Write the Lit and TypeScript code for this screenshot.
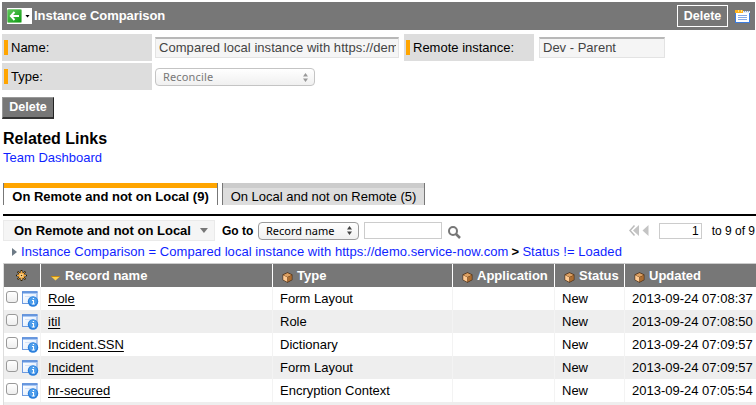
import { LitElement, html, css, svg } from "lit";
import { customElement } from "lit/decorators.js";

interface RecordRow {
  name: string;
  type: string;
  application: string;
  status: string;
  updated: string;
}

const rows: RecordRow[] = [
  { name: "Role", type: "Form Layout", application: "", status: "New", updated: "2013-09-24 07:08:37" },
  { name: "itil", type: "Role", application: "", status: "New", updated: "2013-09-24 07:08:50" },
  { name: "Incident.SSN", type: "Dictionary", application: "", status: "New", updated: "2013-09-24 07:09:57" },
  { name: "Incident", type: "Form Layout", application: "", status: "New", updated: "2013-09-24 07:09:57" },
  { name: "hr-secured", type: "Encryption Context", application: "", status: "New", updated: "2013-09-24 07:05:54" },
];

const backIcon = html`<svg width="15" height="14" viewBox="0 0 15 14">
  <defs><linearGradient id="g" x1="0" y1="0" x2="1" y2="1"><stop offset="0" stop-color="#62c95c" /><stop offset="1" stop-color="#0c9a12" /></linearGradient></defs>
  <rect x=".5" y=".5" width="14" height="13" rx="1" fill="url(#g)" stroke="#7fca7c" />
  <path d="M7.500 3 3.800 7l3.700 4M4 7H12" fill="none" stroke="#fff" stroke-width="1.900" />
</svg>`;

const formIcon = html`<svg width="15" height="13" viewBox="0 0 15 13">
  <rect x=".5" y="1.500" width="14" height="11" fill="#fff" stroke="#3b7de0" />
  <path d="M0 0h8v3H0z" fill="#ffb21c" /><path d="M3 0h1v2H3zM6 0h1v2H6z" fill="#ffe08a" />
  <path d="M8 1h7v2H8z" fill="#e9eef8" /><path d="M9 1h1v1H9zM11 1h1v1h-1zM13 1h1v1h-1z" fill="#8aa4cc" />
  <path d="M3 5.500h9M3 7.500h9M3 9.500h9" stroke="#86a8e6" />
</svg>`;

const cubeIcon = html`<svg class="cube" width="11" height="11" viewBox="0 0 11 11">
  <path d="M5.500 .3 10.400 2.500v5.600L5.500 10.700.6 8.100V2.500z" fill="#4a2a10" />
  <path d="M5.500 1 9.800 2.900 5.500 5 1.200 2.900z" fill="#dda163" />
  <path d="M1.200 3.200 5.400 5.200v4.700L1.200 7.700z" fill="#ffca92" />
  <path d="M9.800 3.200 5.600 5.200v4.700l4.200-2.200z" fill="#ac6d31" />
</svg>`;

const gearIcon = html`<svg width="11" height="11" viewBox="0 0 11 11">
  <path d="M5.500 0v11M0 5.500h11M1.600 1.600l7.800 7.800M9.400 1.600 1.600 9.400" stroke="#2b1d00" stroke-width="1.700" />
  <path d="M5.500 1v9M1 5.500h9M2.300 2.300l6.400 6.400M8.700 2.300 2.300 8.700" stroke="#f0a63c" stroke-width="1" />
  <circle cx="5.500" cy="5.500" r="3" fill="#f3ab45" />
  <circle cx="5.500" cy="5.500" r="1.700" fill="#ffe0a0" />
  <circle cx="5.500" cy="5.500" r=".8" fill="#4a2d00" />
</svg>`;

const infoIcon = html`<svg class="info" width="17" height="16" viewBox="0 0 17 16">
  <defs><linearGradient id="w" x1="0" y1="0" x2="1" y2="1"><stop offset="0" stop-color="#fff" /><stop offset="1" stop-color="#dce9fb" /></linearGradient></defs>
  <rect x=".5" y="1" width="14.500" height="11.500" fill="url(#w)" stroke="#6e9be0" />
  <path d="M0 1h15.500" stroke="#4f86d8" stroke-width="1.500" /><path d="M1 2.500h14" stroke="#a9c8f4" />
  <path d="M3 5.500h9" stroke="#d5e3f8" />
  <circle cx="11" cy="10.500" r="5.200" fill="#2a7fdc" />
  <circle cx="11" cy="9.800" r="3.900" fill="#4d9deb" />
  <path d="M10 9.500h1.500v3.500M9.800 13h3M10.800 7.500h1.300" fill="none" stroke="#fff" stroke-width="1.100" />
</svg>`;

const updown = (color: string) => svg`<svg width="5" height="9" viewBox="0 0 5 9"><path d="M0 3.500h5L2.500 0zM0 5.500h5L2.500 9z" fill=${color} /></svg>`;

@customElement("app-root")
export class AppRoot extends LitElement {
  static styles = css`
    :host { display: block; width: 756px; height: 405px; overflow: hidden; background: #fff; color: #000; font: 13px/16px "Liberation Sans", Arial, sans-serif; box-sizing: border-box; padding: 2px 0 0 2px; }
    * { box-sizing: border-box; }
    svg { display: block; flex: none; }
    div, span, a { white-space: nowrap; }
    .titlebar { display: flex; align-items: center; height: 28px; width: 753px; background: #777; color: #fff; font-weight: bold; padding: 0 5px 0 5px; }
    .back { display: flex; align-items: center; width: 25px; height: 16px; background: #fff; margin-right: 2px; }
    .caret { width: 5px; height: 3px; background: #000; clip-path: polygon(0 0, 100% 0, 50% 100%); margin-left: 3px; }
    .title { flex: 1; letter-spacing: -.05px; }
    .top-delete { border: 1px solid #fff; width: 51px; height: 22px; line-height: 20px; text-align: center; font-size: 12.500px; margin-right: 7px; }
    .form { display: grid; grid-template-columns: 150px 252px 130px 1fr; grid-auto-rows: 27px; row-gap: 2px; margin-top: 4px; }
    .label { display: flex; align-items: center; background: #ddd; padding-left: 2px; }
    .label::before { content: ""; width: 4px; height: 15px; background: #ffa500; margin-right: 3px; }
    .field { display: flex; align-items: center; padding-left: 3px; }
    .remote { padding-left: 5px; }
    .text { height: 21px; width: 244px; border: 1px solid #e3e3e3; border-top: 2px solid #b8b8b8; background: #f5f5f5; color: #444; padding: 0 2px 0 3px; line-height: 18px; overflow: hidden; }
    .text span { display: block; overflow: hidden; letter-spacing: .05px; }
    .remote .text { width: 126px; }
    .select { display: flex; align-items: center; justify-content: space-between; border: 1px solid #9b9b9b; border-radius: 4px; height: 18px; font: 11px/16px "Noto Sans", "Open Sans", sans-serif; background: linear-gradient(#fff, #f0f0f0); }
    .type { width: 160px; padding: 0 6px 0 7px; color: #777; border-color: #c4c4c4; letter-spacing: .15px; margin-top: 1px; }
    .delete { width: 52px; height: 22px; margin-top: 7px; background: #777; border: 1px solid #999; border-right-color: #222; border-bottom: 2px solid #333; color: #fff; font-weight: bold; font-size: 12.500px; text-align: center; line-height: 19px; }
    .related { margin: 10px 0 0 1px; font: bold 16px/20px "Liberation Sans", Arial, sans-serif; }
    a { color: #0f1fff; text-decoration: none; }
    .team { margin: 1px 0 0 1px; }
    .tabs { display: flex; gap: 4px; margin: 17px 0 0 1px; }
    .tab { height: 22px; box-shadow: inset 1px 0 #777, inset -1px 0 #777; padding-top: 5px; background: linear-gradient(#ccc 5px, #ddd 5px); line-height: 17px; text-align: center; width: 203px; }
    .tab.active { width: 215px; background: linear-gradient(#ffa500 5px, #fff 5px); font-weight: bold; }
    .rule { height: 2px; background: #000; margin: 9px 0 0 1px; }
    .toolbar { display: flex; align-items: center; height: 21px; margin: 4px 0 0 1px; }
    .listmenu { display: flex; align-items: center; width: 212px; height: 21px; background: #f5f5f5; border: 1px solid #eaeaea; font-weight: bold; padding-left: 10px; margin-right: 7px; }
    .down { width: 8px; height: 5px; background: #777; clip-path: polygon(0 0, 100% 0, 50% 100%); margin-left: 9px; }
    .goto { font-weight: bold; font-size: 12px; width: 36px; }
    .column { width: 101px; padding: 0 6px 0 7px; margin-right: 5px; }
    .search { width: 78px; height: 17px; border: 1px solid #ccc; margin-right: 6px; }
    .mag { margin-top: 3px; }
    .pager { display: flex; align-items: center; margin-left: auto; padding-right: 1px; font-size: 12px; }
    .page { width: 43px; height: 16px; border: 1px solid #ccc; text-align: right; padding-right: 2px; line-height: 15px; margin: 0 10px; }
    .crumbs { display: flex; align-items: center; height: 22px; padding-left: 10px; letter-spacing: .055px; }
    .right { width: 5px; height: 8px; background: #6d7a86; clip-path: polygon(0 0, 100% 50%, 0 100%); margin-right: 4px; }
    .gt { font-weight: bold; margin: 0 3px; width: 8px; }
    .table { margin-left: 1px; border-top: 1px solid #ccc; border-left: 1px solid #ddd; }
    .row { display: grid; grid-template-columns: 36px 232px 180px 102px 70px 1fr; height: 23px; }
    .row:nth-child(odd) { background: #eee; }
    .row > div { display: flex; align-items: center; padding-left: 7px; border-left: 1px solid #f3f3f3; }
    .row > div:first-child { padding-left: 1px; border-left: 0; }
    .row.head { background: #777; color: #fff; font-weight: bold; }
    .row.head > div { padding-left: 9px; border-left-color: #fff; }
    .row.head > div:first-child { padding-left: 12px; }
    .cube { margin: 3px 4px 0 0; }
    .sort { width: 11px; height: 5px; background: linear-gradient(#c98a10 1px, #ffd24a 1px); clip-path: polygon(0 0, 100% 0, 50% 100%); margin: 5px 4px 0 0; }
    .check { width: 12px; height: 12px; border: 1px solid #999; border-radius: 3px; background: linear-gradient(#fff, #eee); margin: -3px 4px 0 1px; }
    .name { color: #000; text-decoration: underline; text-underline-offset: 2px; }
  `;

  private head(label: string) {
    return html`<div>${cubeIcon}<span>${label}</span></div>`;
  }

  render() {
    return html`
      <div class="titlebar">
        <div class="back">${backIcon}<i class="caret"></i></div>
        <span class="title">Instance Comparison</span>
        <div class="top-delete">Delete</div>
        ${formIcon}
      </div>
      <div class="form">
        <div class="label">Name:</div>
        <div class="field"><div class="text"><span>Compared local instance with https://dem</span></div></div>
        <div class="label">Remote instance:</div>
        <div class="field remote"><div class="text">Dev - Parent</div></div>
        <div class="label">Type:</div>
        <div class="field"><div class="select type">Reconcile ${updown("#999")}</div></div>
      </div>
      <div class="delete">Delete</div>
      <div class="related">Related Links</div>
      <div class="team"><a>Team Dashboard</a></div>
      <div class="tabs">
        <div class="tab active">On Remote and not on Local (9)</div>
        <div class="tab">On Local and not on Remote (5)</div>
      </div>
      <div class="rule"></div>
      <div class="toolbar">
        <div class="listmenu"><span>On Remote and not on Local</span><i class="down"></i></div>
        <span class="goto">Go to</span>
        <div class="select column">Record name ${updown("#444")}</div>
        <div class="search"></div>
        <svg class="mag" width="13" height="13" viewBox="0 0 13 13"><circle cx="5" cy="5" r="4" fill="none" stroke="#777" stroke-width="2" /><path d="m8 8 4 4" stroke="#777" stroke-width="2.500" /></svg>
        <div class="pager">
          <svg width="20" height="11" viewBox="0 0 20 11"><path d="M5.500.5 1 5.500l4.500 5" fill="none" stroke="#bbb" stroke-width="1.500" /><path d="M10 0v11L4 5.500zM19.500 0v11l-6-5.500z" fill="#c4c4c4" /></svg>
          <div class="page">1</div>
          <span>to 9 of 9</span>
        </div>
      </div>
      <div class="crumbs">
        <i class="right"></i><a>Instance Comparison = Compared local instance with https://demo.service-now.com</a><span class="gt">&gt;</span><a>Status != Loaded</a>
      </div>
      <div class="table">
        <div class="row head">
          <div>${gearIcon}</div>
          <div><i class="sort"></i><span>Record name</span></div>
          ${["Type", "Application", "Status", "Updated"].map((l) => this.head(l))}
        </div>
        ${rows.map(
          (r) => html`<div class="row">
            <div><i class="check"></i>${infoIcon}</div>
            <div><a class="name">${r.name}</a></div>
            <div>${r.type}</div>
            <div>${r.application}</div>
            <div>${r.status}</div>
            <div>${r.updated}</div>
          </div>`
        )}
        <div class="row"></div>
      </div>
    `;
  }
}
